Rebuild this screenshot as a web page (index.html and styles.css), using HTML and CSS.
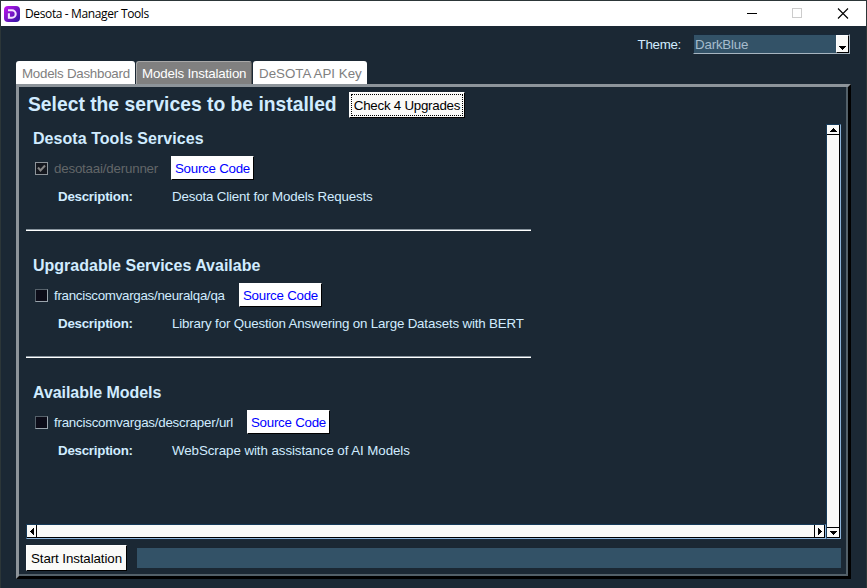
FILE: index.html
```html
<!DOCTYPE html>
<html lang="en">
<head>
<meta charset="utf-8">
<title>Desota - Manager Tools</title>
<link rel="stylesheet" href="styles.css">
</head>
<body>
<div class="window">
  <header class="titlebar">
    <svg class="logo" width="16" height="16" viewBox="0 0 16 16">
      <defs><linearGradient id="g" x1="0" y1="0" x2="1" y2="1"><stop offset="0" stop-color="#c414ee"/><stop offset="1" stop-color="#2a14a0"/></linearGradient></defs>
      <rect width="16" height="16" rx="4" fill="url(#g)"/>
      <path d="M4 4.3H8A3.700 3.700 0 0 1 8 11.700H4.900V7.200" fill="none" stroke="#f4e4ff" stroke-width="2.1"/>
    </svg>
    <span class="title">Desota - Manager Tools</span>
    <svg class="controls" width="104" height="12" viewBox="0 0 104 12" shape-rendering="crispEdges">
      <path d="M0 5.5H10" stroke="#000"/>
      <rect x="45.500" y="0.500" width="9" height="9" fill="none" stroke="#ccc"/>
      <path d="M91 0.500L101 10.500M101 0.500L91 10.500" stroke="#000" stroke-width="1.1" shape-rendering="auto"/>
    </svg>
  </header>
  <div class="theme">
    <span class="theme-label">Theme:</span>
    <div class="combo"><span class="combo-value">DarkBlue</span><span class="combo-button"><svg width="7" height="4" viewBox="0 0 7 4" shape-rendering="crispEdges"><path d="M0 0H7V1H6V2H5V3H4V4H3V3H2V2H1V1H0Z"/></svg></span></div>
  </div>
  <nav class="tabs">
    <span class="tab t1">Models Dashboard</span>
    <span class="tab t2 active">Models Instalation</span>
    <span class="tab t3">DeSOTA API Key</span>
  </nav>
  <main class="panel"><div class="panel-inner">
    <div class="panel-head">
      <h1>Select the services to be installed</h1>
      <button class="btn check"><span>Check 4 Upgrades</span></button>
    </div>
    <div class="scroller">
      <div class="content">
        <section>
          <h2 class="h-a">Desota Tools Services</h2>
          <div class="service disabled"><span class="box"><svg width="9" height="9" viewBox="0 0 9 9"><path d="M1 3.500L3.500 6.500L8 1.500" fill="none" stroke="#858585" stroke-width="2"/></svg></span><span class="name n-a">desotaai/derunner</span><button class="btn source"><span>Source Code</span></button></div>
          <div class="desc"><b>Description:</b><span class="d-a">Desota Client for Models Requests</span></div>
          <hr>
        </section>
        <section>
          <h2 class="h-b">Upgradable Services Availabe</h2>
          <div class="service"><span class="box"></span><span class="name n-b">franciscomvargas/neuralqa/qa</span><button class="btn source"><span>Source Code</span></button></div>
          <div class="desc"><b>Description:</b><span class="d-b">Library for Question Answering on Large Datasets with BERT</span></div>
          <hr>
        </section>
        <section>
          <h2 class="h-c">Available Models</h2>
          <div class="service"><span class="box"></span><span class="name n-c">franciscomvargas/descraper/url</span><button class="btn source"><span>Source Code</span></button></div>
          <div class="desc"><b>Description:</b><span class="d-c">WebScrape with assistance of AI Models</span></div>
        </section>
      </div>
      <div class="vbar">
        <span class="arrow up"><svg width="7" height="4" viewBox="0 0 7 4" shape-rendering="crispEdges"><path d="M3 0H4V1H5V2H6V3H7V4H0V3H1V2H2V1H3Z"/></svg></span>
        <span class="arrow down"><svg width="7" height="4" viewBox="0 0 7 4" shape-rendering="crispEdges"><path d="M0 0H7V1H6V2H5V3H4V4H3V3H2V2H1V1H0Z"/></svg></span>
      </div>
      <div class="hbar">
        <span class="arrow left"><svg width="4" height="7" viewBox="0 0 4 7" shape-rendering="crispEdges"><path d="M4 0V7H3V6H2V5H1V4H0V3H1V2H2V1H3V0Z"/></svg></span>
        <span class="arrow right"><svg width="4" height="7" viewBox="0 0 4 7" shape-rendering="crispEdges"><path d="M0 0V7H1V6H2V5H3V4H4V3H3V2H2V1H1V0Z"/></svg></span>
      </div>
    </div>
    <div class="footer">
      <button class="btn start"><span>Start Instalation</span></button>
      <div class="progress"></div>
    </div>
  </div></main>
</div>
</body>
</html>
```
FILE: styles.css
```css
* { box-sizing: border-box; }
body { margin: 0; background: #1b2834; font: 13.33px/16px "Liberation Sans", Arial, sans-serif; color: #d1ecff; white-space: nowrap; overflow: hidden; }
svg { display: block; }
.window { width: 867px; height: 588px; border: 1px solid #2c3638; border-bottom-width: 0; display: flex; flex-direction: column; }
.titlebar { height: 25px; flex: none; background: #fff; color: #000; display: flex; align-items: center; padding-left: 3px; }
.title { font: 12px/16px "Open Sans", "Noto Sans", sans-serif; margin-left: 5px; letter-spacing: -.37px; }
.controls { margin-left: auto; margin-right: 15px; }
.theme { display: flex; height: 35px; padding: 8px 16px 0 0; justify-content: flex-end; align-items: flex-start; }
.theme-label { line-height: 21px; margin-right: 12px; letter-spacing: -.3px; }
.combo { width: 157px; height: 20px; background: #335267; border: 1px solid #182838; border-right-color: #a7b5c0; border-bottom-color: #a7b5c0; display: flex; justify-content: space-between; color: #a6bccd; }
.combo-value { line-height: 19px; padding-left: 1px; letter-spacing: -.2px; }
.combo-button { width: 13px; height: 18px; background: #fafaf8; border: 1px solid #fff; border-right-color: #000; border-bottom-color: #000; display: flex; align-items: flex-end; justify-content: center; padding-bottom: 2px; }
.tabs { display: flex; height: 23px; padding-left: 15px; gap: 1px; }
.tab { height: 23px; background: #fff; color: #808080; line-height: 25px; border-radius: 3px 3px 0 0; padding-left: 6px; }
.tab.t1 { width: 119px; letter-spacing: -.25px; }
.tab.t2 { width: 116px; border: 1px solid #a8a8a8; border-bottom: 0; border-right-color: #555; padding-left: 5px; line-height: 23px; letter-spacing: -.17px; }
.tab.t3 { width: 114px; padding-left: 6px; }
.tab.active { background: #808080; color: #fff; }
.panel { margin-left: 15px; width: 835px; height: 495px; border-style: solid; border-width: 3px; border-color: #8d949a #000 #000 #8d949a; }
.panel-inner { height: 489px; border: solid #536069; border-width: 0 2px 2px 0; padding-left: 7px; }
.panel-head { height: 37px; display: flex; align-items: flex-start; padding: 5px 0 0 2px; }
h1, h2 { margin: 0; }
h1 { font-size: 19.3px; line-height: 26px; width: 321px; }
.btn { font: inherit; color: #000; background: #fafaf8; border: 1px solid #fff; border-right-color: #000; border-bottom-color: #000; padding: 0; margin: 0; display: flex; align-items: center; justify-content: center; }
.check { width: 116px; height: 26px; letter-spacing: -.25px; }
.check span { border: 1px dotted #000; width: 112px; height: 22px; line-height: 22px; }
.scroller { width: 815px; height: 415px; display: grid; grid-template: 400px 15px / 800px 15px; }
.content { padding: 1px 0 0; }
section { height: 127px; }
h2 { font-size: 16px; line-height: 27px; padding-left: 7px; }
.h-a { letter-spacing: .05px; }
.h-c { letter-spacing: -.06px; }
.service { height: 32px; display: flex; align-items: center; padding-left: 9px; }
.box { width: 13px; height: 13px; border: 1px solid #56616a; border-right-color: #9aa4ac; border-bottom-color: #9aa4ac; background: #0c0c18; display: flex; justify-content: center; align-items: center; }
.disabled .box { background: #15181f; border-color: #8d949a; }
.name { margin-left: 6px; line-height: 18px; padding-top: 2px; }
.disabled .name { color: #626668; }
.n-a { width: 117px; letter-spacing: -.2px; }
.n-b { width: 185px; letter-spacing: -.28px; }
.n-c { width: 193px; letter-spacing: -.23px; }
.source { color: #00f; background: #fff; width: 83px; height: 24px; letter-spacing: -.25px; }
.source span, .start span { padding-top: 2px; }
.desc { height: 24px; line-height: 25px; padding-left: 32px; display: flex; }
.desc b { width: 114px; letter-spacing: -.25px; }
.d-a, .d-b { letter-spacing: -.165px; }
.d-c { letter-spacing: -.07px; }
hr { width: 505px; height: 2px; margin: 21px 0 0; border: 0; border-top: 1px solid #87939c; background: #fff; }
.vbar { grid-row: 1 / 3; grid-column: 2; border: 1px solid #173b59; border-right-color: #8db5dc; border-bottom-color: #8db5dc; display: flex; flex-direction: column; justify-content: space-between; background: linear-gradient(to left, #000 1px, #fafaf8 1px); }
.hbar { border: 1px solid #173b59; border-right-color: #8db5dc; border-bottom-color: #8db5dc; display: flex; justify-content: space-between; background: linear-gradient(to top, #000 1px, #fafaf8 1px); }
.arrow { display: flex; align-items: center; justify-content: center; border: 0 solid #000; }
.vbar .arrow { height: 10px; border-right-width: 1px; }
.vbar .arrow.down { height: 11px; border-bottom-width: 1px; }
.arrow.up { border-bottom-width: 1px; }
.arrow.down { border-top-width: 1px; }
.hbar .arrow { width: 10px; }
.hbar .arrow.right { width: 11px; border-right-width: 1px; }
.arrow.left { border-right-width: 1px; }
.arrow.right { border-left-width: 1px; }
.footer { display: flex; padding-top: 6px; align-items: center; }
.start { width: 101px; height: 26px; letter-spacing: -.1px; }
.progress { margin-left: 10px; width: 704px; height: 20px; background: #335267; }
```
